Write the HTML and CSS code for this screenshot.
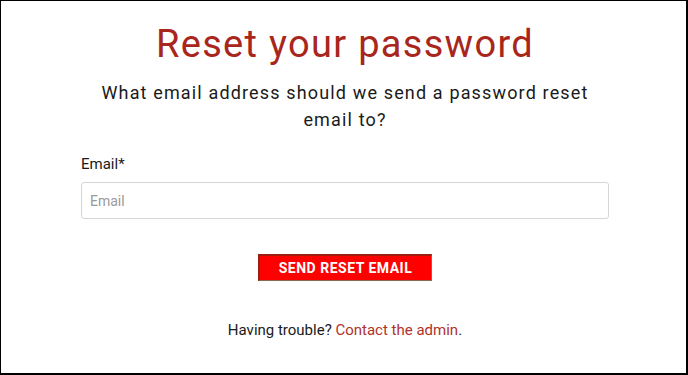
FILE: index.html
```html
<!DOCTYPE html>
<html lang="en">
<head>
<meta charset="utf-8">
<title>Reset your password</title>
<link rel="stylesheet" href="styles.css">
</head>
<body>
<div class="frame">
  <div class="content">
    <h1 class="title">Reset your password</h1>
    <p class="subtitle">What email address should we send a password reset email to?</p>
    <form class="form">
      <label class="label" for="email">Email*</label>
      <input class="input" id="email" type="email" placeholder="Email">
      <div class="actions">
        <button class="button" type="button">SEND RESET EMAIL</button>
      </div>
    </form>
    <p class="help">Having trouble? <a class="link" href="#">Contact the admin</a>.</p>
  </div>
</div>
</body>
</html>
```

FILE: styles.css
```css
html, body {
  margin: 0;
  padding: 0;
  background: #fff;
}
body {
  font-family: Roboto, "Liberation Sans", Arial, sans-serif;
  color: #1a1a1a;
}
.frame {
  width: 688px;
  height: 375px;
  box-sizing: border-box;
  border-style: solid;
  border-color: #000;
  border-width: 1px 2px 2px 1px;
  padding-left: 3px;
  background: #fff;
}
.content {
  width: 528px;
  margin: 0 auto;
  padding-top: 20px;
  text-align: center;
}
.title {
  margin: 0;
  font-size: 38px;
  line-height: 46px;
  font-weight: 400;
  color: #a8261c;
  letter-spacing: 1.3px;
}
.subtitle {
  margin: 12px 0 0;
  font-size: 18px;
  line-height: 27px;
  letter-spacing: 1.15px;
  color: #1a1a1a;
}
.form {
  display: flex;
  flex-direction: column;
  align-items: stretch;
  margin-top: 21px;
  text-align: left;
}
.label {
  font-size: 15px;
  line-height: 20px;
  color: #1a1a1a;
}
.input {
  margin-top: 8px;
  height: 37px;
  box-sizing: border-box;
  border: 1px solid #d6d6d6;
  border-radius: 3px;
  padding: 0 8px;
  font-family: Roboto, "Liberation Sans", Arial, sans-serif;
  font-size: 14px;
  color: #333;
  background: #fff;
}
.input::placeholder {
  color: #9a9a9a;
}
.actions {
  display: flex;
  justify-content: center;
  margin-top: 35px;
}
.button {
  width: 174px;
  height: 27px;
  box-sizing: border-box;
  background: #ff0000;
  border-style: solid;
  border-width: 2px 1px 1px 2px;
  border-color: #9a1f12 #8a6a50 #8a6a50 #9a1f12;
  color: #fff;
  font-family: Roboto, "Liberation Sans", Arial, sans-serif;
  font-weight: 700;
  font-size: 14px;
  letter-spacing: 0.5px;
  padding: 0;
  cursor: pointer;
}
.help {
  margin: 39px 0 0;
  font-size: 15px;
  line-height: 20px;
  color: #1a1a1a;
}
.link {
  color: #b0322a;
  text-decoration: none;
}
```
